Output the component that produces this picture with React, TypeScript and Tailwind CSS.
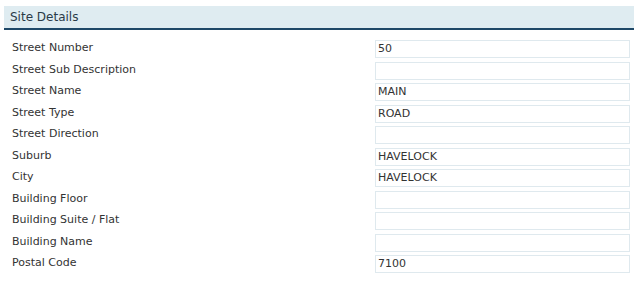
const fields: { label: string; value: string }[] = [
  { label: "Street Number", value: "50" },
  { label: "Street Sub Description", value: "" },
  { label: "Street Name", value: "MAIN" },
  { label: "Street Type", value: "ROAD" },
  { label: "Street Direction", value: "" },
  { label: "Suburb", value: "HAVELOCK" },
  { label: "City", value: "HAVELOCK" },
  { label: "Building Floor", value: "" },
  { label: "Building Suite / Flat", value: "" },
  { label: "Building Name", value: "" },
  { label: "Postal Code", value: "7100" },
];

function FieldRow({ label, value }: { label: string; value: string }) {
  return (
    <div className="flex h-[21.5px] items-start">
      <div className="w-[371px] pl-[8px] pt-[1px] text-[11px] leading-[14px]">{label}</div>
      <div className="h-[18px] w-[255px] border border-[#dfe9ee] bg-white px-[2px] text-[11px] leading-[16px]">
        {value}
      </div>
    </div>
  );
}

export default function App() {
  return (
    <div className="h-[281px] w-[640px] bg-white pt-[6px] pl-[4px] font-['DejaVu_Sans',sans-serif] text-[#333333]">
      <div className="w-[630px]">
        <div className="h-[24px] border-b-2 border-[#1e4868] bg-[#dfecf1] pl-[6px] text-[12px] leading-[22px] text-[#2a3a48]">
          Site Details
        </div>
        <div className="pt-[10px]">
          {fields.map((f) => (
            <FieldRow key={f.label} label={f.label} value={f.value} />
          ))}
        </div>
      </div>
    </div>
  );
}
